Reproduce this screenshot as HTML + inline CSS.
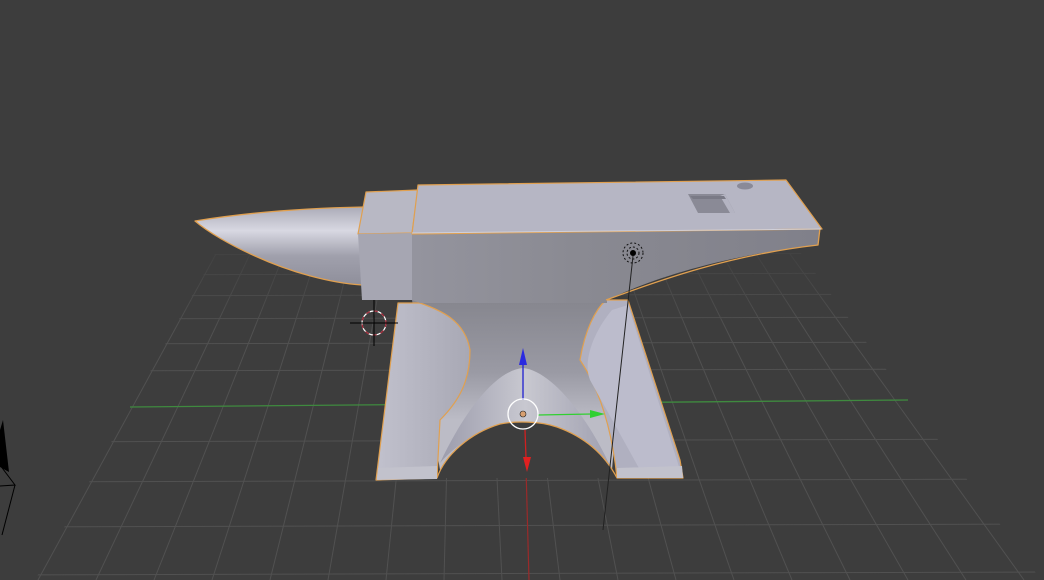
<!DOCTYPE html>
<html><head><meta charset="utf-8"><style>
html,body{margin:0;padding:0;background:#3d3d3d;width:1044px;height:580px;overflow:hidden}
svg{display:block}
</style></head><body>
<svg width="1044" height="580" viewBox="0 0 1044 580" xmlns="http://www.w3.org/2000/svg">
<defs>
<linearGradient id="fade" x1="0" y1="240" x2="0" y2="330" gradientUnits="userSpaceOnUse">
<stop offset="0" stop-color="#fff" stop-opacity="0.15"/><stop offset="1" stop-color="#fff" stop-opacity="1"/></linearGradient>
<mask id="m"><rect width="1044" height="580" fill="url(#fade)"/></mask>
<clipPath id="gc"><polygon points="216,252 800,252 1044,584 1044,580 35,580"/></clipPath>
<linearGradient id="horn" x1="0" y1="205" x2="0" y2="290" gradientUnits="userSpaceOnUse">
<stop offset="0" stop-color="#a8a8b4"/><stop offset="0.3" stop-color="#d8d8e2"/><stop offset="0.6" stop-color="#a0a0ac"/><stop offset="1" stop-color="#8c8c98"/></linearGradient>
<linearGradient id="front" x1="412" y1="0" x2="820" y2="0" gradientUnits="userSpaceOnUse">
<stop offset="0" stop-color="#94949e"/><stop offset="0.4" stop-color="#8a8a92"/><stop offset="1" stop-color="#80808a"/></linearGradient>
<linearGradient id="neck" x1="0" y1="300" x2="0" y2="420" gradientUnits="userSpaceOnUse">
<stop offset="0" stop-color="#86868e"/><stop offset="0.6" stop-color="#9a9aa4"/><stop offset="1" stop-color="#bcbcc6"/></linearGradient>
<linearGradient id="legl" x1="380" y1="0" x2="470" y2="0" gradientUnits="userSpaceOnUse">
<stop offset="0" stop-color="#c0c0cc"/><stop offset="1" stop-color="#a8a8b4"/></linearGradient>
<linearGradient id="arch" x1="440" y1="0" x2="610" y2="0" gradientUnits="userSpaceOnUse">
<stop offset="0" stop-color="#9c9cac"/><stop offset="0.5" stop-color="#c8c8d0"/><stop offset="1" stop-color="#a0a0b0"/></linearGradient>
</defs>
<rect width="1044" height="580" fill="#3d3d3d"/>
<g clip-path="url(#gc)" mask="url(#m)" stroke="#515151" stroke-width="1" fill="none">
<line x1="216" y1="254" x2="38" y2="580"/><line x1="250" y1="254" x2="96" y2="580"/>
<line x1="284" y1="254" x2="154" y2="580"/><line x1="317" y1="254" x2="212" y2="580"/>
<line x1="351" y1="254" x2="270" y2="580"/><line x1="385" y1="254" x2="328" y2="580"/>
<line x1="419" y1="254" x2="386" y2="580"/><line x1="452" y1="254" x2="444" y2="580"/>
<line x1="486" y1="254" x2="502" y2="580"/><line x1="520" y1="254" x2="560" y2="580"/>
<line x1="554" y1="254" x2="618" y2="580"/><line x1="587" y1="254" x2="676" y2="580"/>
<line x1="621" y1="254" x2="734" y2="580"/><line x1="655" y1="254" x2="792" y2="580"/>
<line x1="689" y1="254" x2="850" y2="580"/><line x1="722" y1="254" x2="908" y2="580"/>
<line x1="756" y1="254" x2="966" y2="580"/><line x1="790" y1="254" x2="1024" y2="580"/>
<line x1="0" y1="255" x2="1044" y2="253"/><line x1="0" y1="275" x2="1044" y2="273"/>
<line x1="0" y1="296" x2="1044" y2="294"/><line x1="0" y1="319" x2="1044" y2="317"/>
<line x1="0" y1="344" x2="1044" y2="342"/><line x1="0" y1="371" x2="1044" y2="369"/>
<line x1="0" y1="442" x2="1044" y2="439"/><line x1="0" y1="482" x2="1044" y2="479"/>
<line x1="0" y1="527" x2="1044" y2="524"/><line x1="0" y1="575" x2="1044" y2="572"/>
</g>
<line x1="130" y1="407" x2="908" y2="400" stroke="#3f8a3f" stroke-width="1.3"/>
<line x1="525" y1="430" x2="529" y2="580" stroke="#9a2a2a" stroke-width="1.2"/>
<polygon points="3,420 9,472 0,467 0,430" fill="#000"/>
<polyline points="0,465 15,485 0,486" fill="none" stroke="#000"/>
<line x1="15" y1="485" x2="2" y2="535" stroke="#000"/>
<g stroke-linejoin="round">
<path d="M195,221 C250,212 310,208 364,207 L362,285 C330,283 290,272 255,256 C230,245 208,232 195,221 Z" fill="url(#horn)" stroke="#e0a050" stroke-width="1.3"/>
<polygon points="366,192 418,190 412,233 358,234" fill="#b8b8c4" stroke="#e0a050" stroke-width="1.2"/>
<polygon points="358,234 412,233 413,300 362,300" fill="#a6a6b2"/>
<path d="M412,300 L626,300 L612,470 L440,470 Z" fill="url(#neck)"/>
<path d="M398,303 L420,303 C440,310 465,320 470,350 C470,380 460,400 440,420 L437,478 L376,480 Z" fill="url(#legl)" stroke="#e0a050" stroke-width="1.2"/>
<path d="M606,300 L628,300 L680,460 L683,478 L617,478 C612,430 600,390 580,360 C585,330 595,310 606,300 Z" fill="#b0b0c0" stroke="#e0a050" stroke-width="1.2"/>
<path d="M612,310 C595,330 582,360 590,380 L640,470 L680,470 L628,305 Z" fill="#bcbccc"/>
<path d="M440,463 C470,400 500,370 523,368 C548,370 585,410 612,470 L590,447 C565,428 545,422 523,422 C490,424 460,440 440,463 Z" fill="url(#arch)"/>
<path d="M437,478 C445,455 470,433 500,424 C515,421 540,421 557,427 C585,437 605,455 617,478 Z" fill="#3d3d3d"/>
<path d="M437,478 C445,455 470,433 500,424 C515,421 540,421 557,427 C585,437 605,455 617,478" fill="none" stroke="#e0a050" stroke-width="1.2"/>
<polygon points="378,468 437,466 437,479 377,480" fill="#c2c2cc"/>
<polygon points="617,468 682,466 683,478 617,478" fill="#c2c2cc"/>
<path d="M412,233 L820,228 L818,245 C730,255 660,275 607,300 L607,303 L420,303 L412,300 Z" fill="url(#front)"/>
<path d="M820,228 L818,245 C730,255 660,280 606,300" fill="none" stroke="#e0a050" stroke-width="1.3"/>
<polygon points="418,185 786,180 822,229 412,234" fill="#b6b6c4" stroke="#e0a050" stroke-width="1.2"/>
<line x1="412" y1="233" x2="821" y2="229" stroke="#d0d0da" stroke-width="1"/>
<polygon points="688,194 725,194 735,213 698,213" fill="#8a8a96"/>
<polygon points="720,196 725,194 735,213 730,213" fill="#b4b4c2"/>
<polygon points="690,196 724,196 726,199 693,199" fill="#7a7a86"/>
<ellipse cx="745" cy="186" rx="8" ry="3.5" fill="#8a8a98"/>
</g>
<line x1="633" y1="256" x2="603" y2="530" stroke="#222" stroke-width="1"/>
<circle cx="633" cy="253" r="10" fill="none" stroke="#111" stroke-dasharray="2,2"/>
<circle cx="633" cy="253" r="6" fill="none" stroke="#111" stroke-dasharray="2,2"/>
<circle cx="633" cy="253" r="3" fill="#000"/>
<circle cx="374" cy="323" r="12" fill="none" stroke="#fff" stroke-width="1.2"/>
<circle cx="374" cy="323" r="12" fill="none" stroke="#a02030" stroke-width="1.2" stroke-dasharray="4,4"/>
<line x1="374" y1="300" x2="374" y2="346" stroke="#000"/>
<line x1="350" y1="323" x2="398" y2="323" stroke="#000"/>
<line x1="523" y1="400" x2="523" y2="362" stroke="#2020d0" stroke-width="1.3"/>
<polygon points="523,348 519,365 527,365" fill="#2a2ae0"/>
<line x1="538" y1="415" x2="592" y2="414" stroke="#30d030" stroke-width="1.3"/>
<polygon points="605,414 590,410 590,418" fill="#30d030"/>
<line x1="525" y1="430" x2="526" y2="458" stroke="#d02020" stroke-width="1.3"/>
<polygon points="527,472 523,457 531,457" fill="#e02020"/>
<circle cx="523" cy="414" r="15" fill="none" stroke="#fff" stroke-width="1.3"/>
<circle cx="523" cy="414" r="3" fill="#d8a070" stroke="#222" stroke-width="0.6"/>
</svg>
</body></html>
